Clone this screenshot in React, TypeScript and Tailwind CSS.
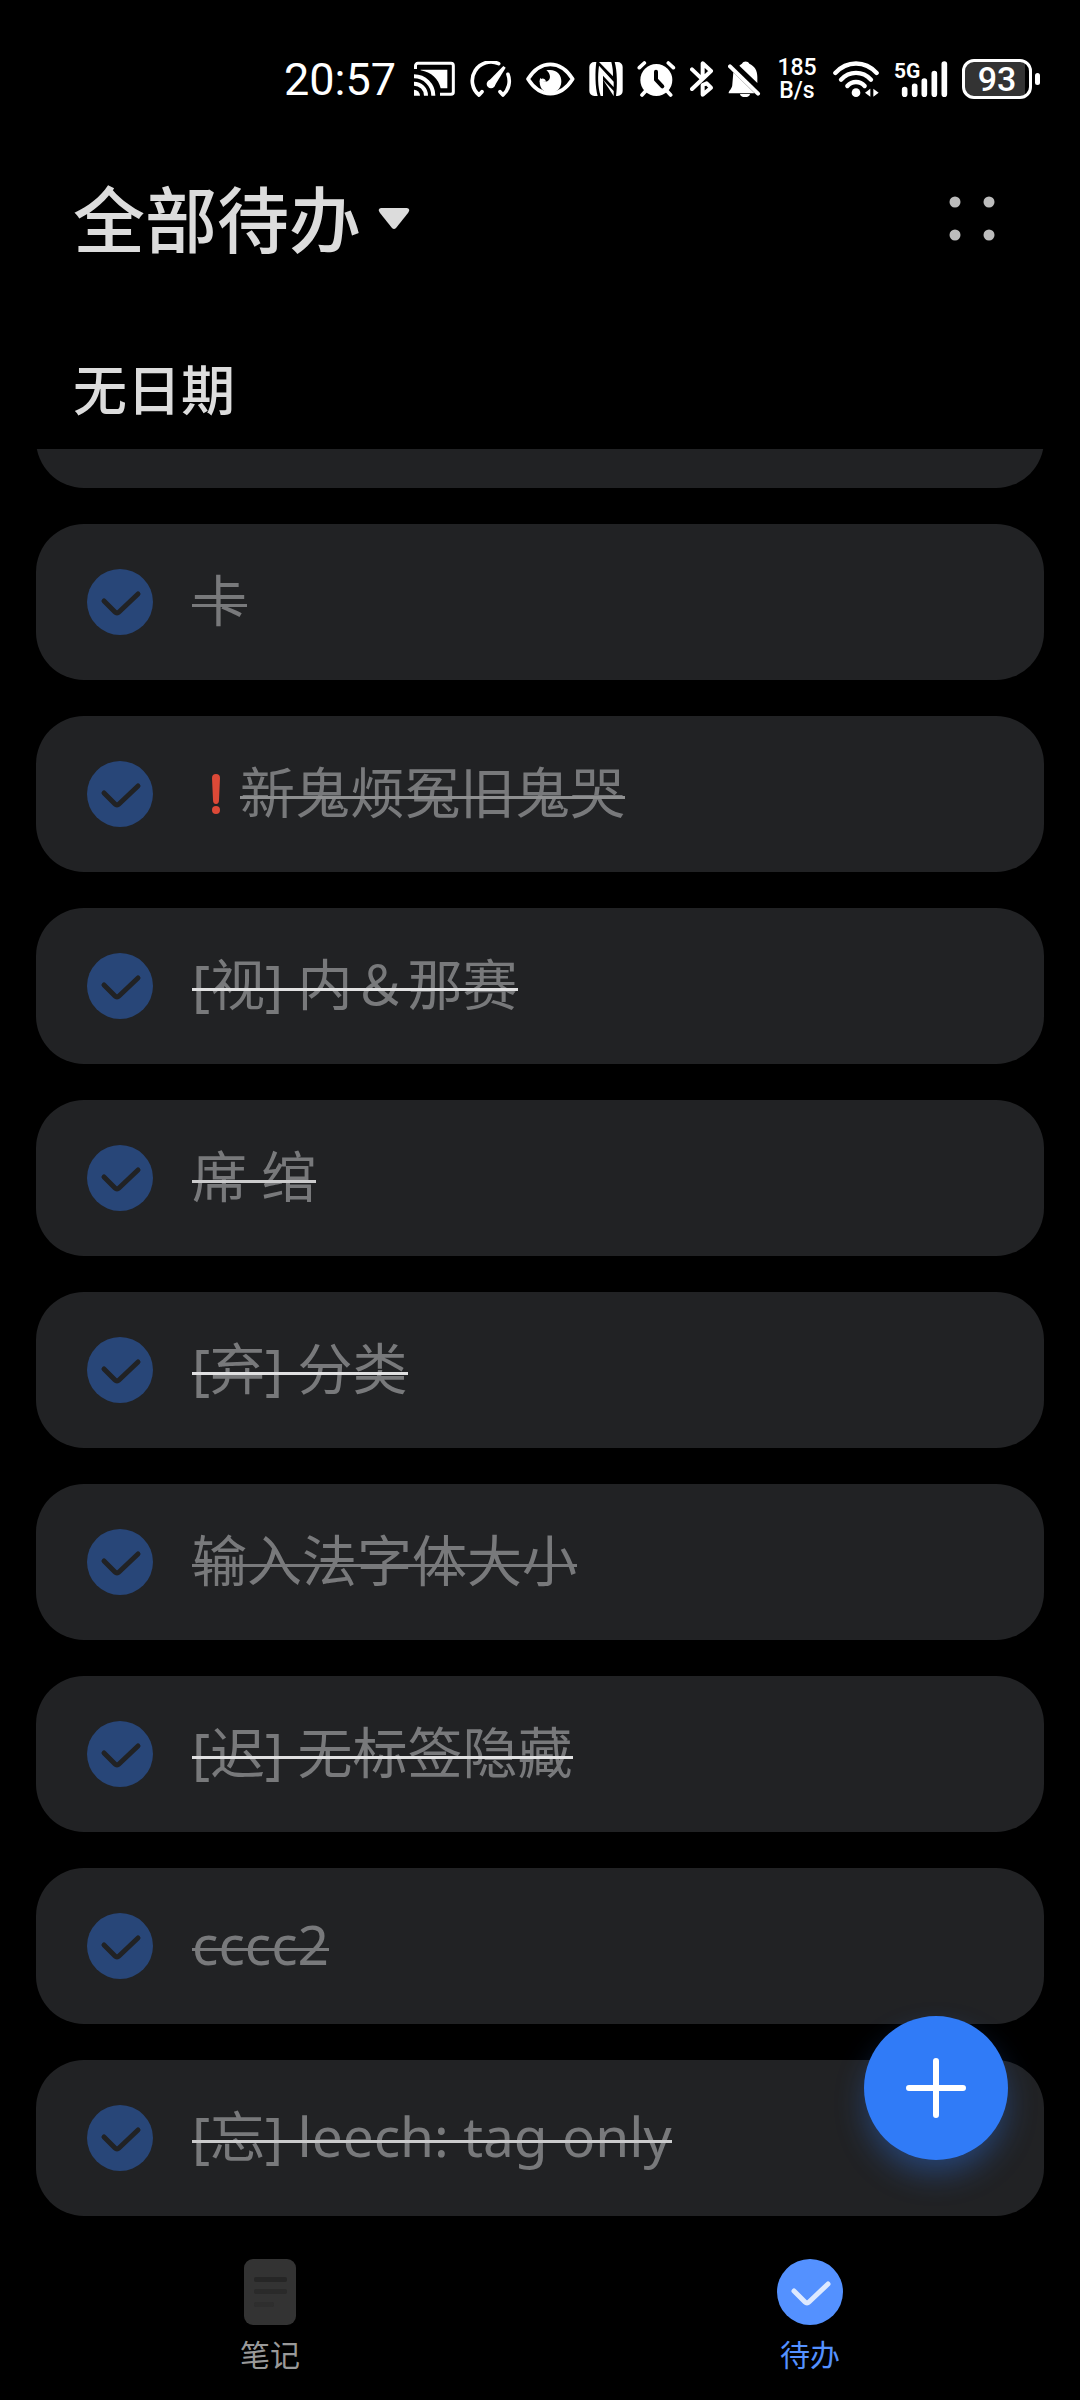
import React, { useState } from "react";

type Todo = {
  id: string;
  text: string;
  urgent?: boolean;
  strike: string;
};

const TODOS: Todo[] = [
  { id: "t1", text: "卡", strike: "after:bg-[#78797b]" },
  { id: "t2", text: "新鬼烦冤旧鬼哭", urgent: true, strike: "after:bg-[#8e8f90]" },
  { id: "t3", text: "[视] 内＆那赛", strike: "after:bg-[#e0e0e1]" },
  { id: "t4", text: "席 绾", strike: "after:bg-[#cbcbcc]" },
  { id: "t5", text: "[弃] 分类", strike: "after:bg-[#e0e0e1]" },
  { id: "t6", text: "输入法字体大小", strike: "after:bg-[#78797b]" },
  { id: "t7", text: "[迟] 无标签隐藏", strike: "after:bg-[#e0e0e1]" },
  { id: "t8", text: "cccc2", strike: "after:bg-[#78797b]" },
  { id: "t9", text: "[忘] leech: tag only", strike: "after:bg-[#cbcbcc]" },
];

function CastIcon() {
  return (
    <svg viewBox="0 0 126 108" className="h-9 w-[42px]" fill="none" stroke="white" strokeWidth="9" aria-hidden="true">
      <path d="M4.500 24V14a7 7 0 0 1 7-7H111a7 7 0 0 1 7 7V93a7 7 0 0 1-7 7H78" />
      <path d="M20 26H100V82H80C74 54 52 34 20 28Z" fill="white" stroke="none" />
      <path d="M0 104V86A18 18 0 0 1 18 104Z" fill="white" stroke="none" />
      <path d="M0 68A36 36 0 0 1 36 104M0 46A58 58 0 0 1 58 104" strokeWidth="12" />
    </svg>
  );
}

function GaugeIcon() {
  return (
    <svg viewBox="0 0 126 108" className="h-9 w-[42px]" fill="none" stroke="white" strokeWidth="11" strokeLinecap="round" strokeLinejoin="round" aria-hidden="true">
      <path d="M36 92L27 102A56 56 0 0 1 86 8" />
      <path d="M114 40A56 56 0 0 1 99 102L90 92" />
      <path d="M54 62L100 15L107 20L73 76Z" fill="white" stroke="none" />
      <circle cx="63" cy="69" r="13" fill="white" stroke="none" />
    </svg>
  );
}

function EyeIcon() {
  return (
    <svg viewBox="0 0 147 108" className="h-9 w-[49px]" fill="none" aria-hidden="true">
      <path d="M6 54C25 24 48 10 73 10S121 24 140 54C121 84 98 98 73 98S25 84 6 54Z" stroke="white" strokeWidth="11" strokeLinejoin="round" />
      <path d="M61 28C90 22 107 40 106 62C105 82 92 95 73 95S41 82 41 62C41 56 42 53 43 50C47 60 56 65 64 61C76 55 74 38 61 28Z" fill="white" />
      <path d="M41 62C42 48 58 50 60 62Z" fill="white" />
    </svg>
  );
}

function NfcIcon() {
  return (
    <svg viewBox="0 0 102 108" className="h-9 w-[34px]" fill="none" aria-hidden="true">
      <path d="M16 3H22C18 30 18 78 26 105H16A15 15 0 0 1 1 90V18A15 15 0 0 1 16 3Z" fill="white" />
      <path d="M86 105H81C85 78 85 30 77 3H86A15 15 0 0 1 101 18V90A15 15 0 0 1 86 105Z" fill="white" />
      <path d="M30 3H67C71 18 72 32 72 46Z" fill="white" />
      <path d="M30 14L74 62V78L42 44V105H35C26 76 26 44 30 14Z" fill="white" />
      <path d="M42 56L74 90V105Z" fill="white" />
    </svg>
  );
}

function AlarmIcon() {
  return (
    <svg viewBox="0 0 117 108" className="h-9 w-[39px]" fill="none" stroke="white" strokeWidth="11" strokeLinecap="round" strokeLinejoin="round" aria-hidden="true">
      <circle cx="58" cy="57" r="48" fill="white" stroke="none" />
      <path d="M7 20L22 6M94 6L109 20M15 102L26 90M90 90L101 102" />
      <path d="M57 32V56L76 76" stroke="black" strokeWidth="12" />
    </svg>
  );
}

function BluetoothIcon() {
  return (
    <svg viewBox="0 0 72 108" className="h-9 w-6" fill="none" stroke="white" strokeWidth="12" strokeLinecap="round" strokeLinejoin="round" aria-hidden="true">
      <path d="M6 25L35 53M6 84L63 30L38 7V48" />
      <path d="M38 72V101L63 80L50 67Z" />
    </svg>
  );
}

function BellOffIcon() {
  return (
    <svg viewBox="0 0 99 108" className="h-9 w-[33px]" fill="white" aria-hidden="true">
      <path d="M6 16L90 98" stroke="white" strokeWidth="12" strokeLinecap="round" />
      <path d="M16 34L80 97H2C1 90 13 84 13 70Z" />
      <path d="M34 14C37 11 40 9 42 8C46 -1 60 -1 64 8C80 15 88 28 88 48V66Z" />
      <path d="M36 99H66A15 10 0 0 1 36 99Z" />
    </svg>
  );
}

function WifiIcon() {
  return (
    <svg viewBox="0 0 141 108" className="h-9 w-[47px]" fill="none" stroke="white" strokeWidth="13" strokeLinecap="round" aria-hidden="true">
      <path d="M7 36C42 -2 96 -2 131 36" />
      <path d="M24 56C49 29 89 29 114 56" />
      <path d="M43 75C57 59 81 59 95 75" />
      <circle cx="69" cy="95" r="13" fill="white" stroke="none" />
      <path d="M96 95L112 83V107ZM121 83V107L137 95Z" fill="white" stroke="none" />
    </svg>
  );
}

function SignalIcon() {
  return (
    <div className="relative h-9 w-[54px]">
      <span className="absolute top-0 left-0 font-[Roboto] text-[21px] leading-5 font-bold">5G</span>
      <svg viewBox="0 0 162 108" className="h-9 w-[54px]" stroke="white" strokeWidth="17" strokeLinecap="round" aria-hidden="true">
        <path d="M32 86V100M62 76V100M91 60V100M121 38V100M151 9V100" />
      </svg>
    </div>
  );
}

function Battery() {
  return (
    <div className="flex items-center gap-[3px]" aria-label="93%">
      <div className="flex h-10 w-[70px] rounded-xl border-3 border-white bg-[linear-gradient(90deg,#333_93%,#000_93%)]">
        <span className="m-auto font-[Roboto] text-[34px] leading-8 font-medium">93</span>
      </div>
      <div className="h-3 w-[5px] rounded-sm bg-white" />
    </div>
  );
}

function StatusBar() {
  return (
    <div className="flex h-[158px] items-center justify-end gap-[14px] pr-10 text-white">
      <time className="mr-1 font-[Roboto] text-[45px] leading-none">20:57</time>
      <CastIcon />
      <GaugeIcon />
      <EyeIcon />
      <NfcIcon />
      <AlarmIcon />
      <BluetoothIcon />
      <BellOffIcon />
      <div className="flex w-11 flex-col items-center font-[Roboto] text-[23px] leading-[23px] font-medium">
        <span>185</span>
        <span>B/s</span>
      </div>
      <WifiIcon />
      <SignalIcon />
      <Battery />
    </div>
  );
}

function CheckMark({ className }: { className: string }) {
  return (
    <svg viewBox="0 0 66 66" className={className} fill="none" stroke="currentColor" strokeWidth="5" strokeLinecap="round" strokeLinejoin="round" aria-hidden="true">
      <path d="M17 32L28 43Q30 45 32 43L51 25" />
    </svg>
  );
}

function UrgentMark() {
  return (
    <svg viewBox="0 0 48 48" className="size-12 shrink-0" fill="#dc4937" role="img" aria-label="紧急">
      <path d="M20 8Q20 4 24 4T28 8L27 30Q27 34 24 34T21 30Z" />
      <circle cx="24" cy="40" r="4" />
    </svg>
  );
}

function TodoCard({ todo }: { todo: Todo }) {
  const [done, setDone] = useState(true);
  return (
    <li>
      <label className="flex h-[156px] items-center rounded-[48px] bg-[#212224] pr-12 pl-[51px]">
        <span className="grid size-[66px] shrink-0 place-items-center">
          <input
            type="checkbox"
            checked={done}
            onChange={(e) => setDone(e.target.checked)}
            className="col-start-1 row-start-1 size-[66px] appearance-none rounded-full border-4 border-[#78797b] checked:border-0 checked:bg-[#284678]"
          />
          {done && <CheckMark className="pointer-events-none col-start-1 row-start-1 size-[66px] text-[#212224]" />}
        </span>
        <span className="ml-[39px] flex items-center text-[55px] leading-[72px] text-[#78797b]">
          {todo.urgent && <UrgentMark />}
          {done ? (
            <del className={`relative pb-1 no-underline after:absolute after:inset-x-0 after:top-10 after:h-[3px] ${todo.strike}`}>{todo.text}</del>
          ) : (
            <span className="pb-1">{todo.text}</span>
          )}
        </span>
      </label>
    </li>
  );
}

export default function App() {
  return (
    <div className="flex min-h-screen flex-col bg-black font-['Noto_Sans','Noto_Sans_CJK_SC',sans-serif]">
      <StatusBar />

      <header className="flex h-[122px] items-center justify-between pr-[84px] pl-[73px]">
        <h1>
          <button type="button" className="flex items-center gap-[17px] text-[72px] leading-[108px] font-medium text-[#dcdcdc]">
            全部待办
            <svg viewBox="0 0 32 22" className="h-[22px] w-8" fill="currentColor" aria-hidden="true">
              <path d="M3 0H29Q33 1 30 5L18 20Q16 22 14 20L2 5Q-1 1 3 0Z" />
            </svg>
          </button>
        </h1>
        <button type="button" aria-label="更多" className="text-[#bcbcbc]">
          <svg viewBox="0 0 48 46" className="h-[46px] w-12" fill="currentColor" aria-hidden="true">
            <circle cx="7" cy="6" r="5.500" />
            <circle cx="41" cy="6" r="5.500" />
            <circle cx="7" cy="39" r="5.500" />
            <circle cx="41" cy="39" r="5.500" />
          </svg>
        </button>
      </header>

      <main className="relative flex flex-1 flex-col">
        <h2 className="flex h-[169px] items-end px-[73px] pb-[19px] text-[54px] leading-[80px] font-medium text-[#dcdcdc]">无日期</h2>
        <div className="overflow-hidden px-9">
          <ul className="-mt-[117px] flex flex-col gap-9">
            <li className="h-[156px] rounded-[48px] bg-[#212224]" />
            {TODOS.map((todo) => (
              <TodoCard key={todo.id} todo={todo} />
            ))}
          </ul>
        </div>
        <button
          type="button"
          aria-label="新建待办"
          className="absolute right-[72px] bottom-14 grid size-36 place-items-center rounded-full bg-[#307bf7] text-white shadow-[0_16px_32px_-4px_rgba(48,123,247,0.4)]"
        >
          <svg viewBox="0 0 60 60" className="size-[60px]" stroke="currentColor" strokeWidth="6" strokeLinecap="round" aria-hidden="true">
            <path d="M30 3V57M3 30H57" />
          </svg>
        </button>
      </main>

      <nav className="grid h-[184px] grid-cols-2 pt-[43px] text-[30px] leading-[60px]">
        <a href="#notes" className="flex flex-col items-center text-[#999]">
          <svg viewBox="0 0 54 66" className="h-[66px] w-[54px]" aria-hidden="true">
            <rect x="1" width="52" height="66" rx="9" fill="#333" />
            <rect x="11" y="18" width="33" height="5" rx="2" fill="#262626" />
            <rect x="11" y="30" width="33" height="5" rx="2" fill="#2a2a2a" />
            <rect x="11" y="43" width="20" height="5" rx="2" fill="#2e2e2e" />
          </svg>
          笔记
        </a>
        <a href="#todos" aria-current="page" className="flex flex-col items-center text-[#5491ff]">
          <span className="size-[66px] rounded-full bg-[#5491ff]">
            <CheckMark className="size-[66px] text-[#dde9ff]" />
          </span>
          待办
        </a>
      </nav>
    </div>
  );
}
